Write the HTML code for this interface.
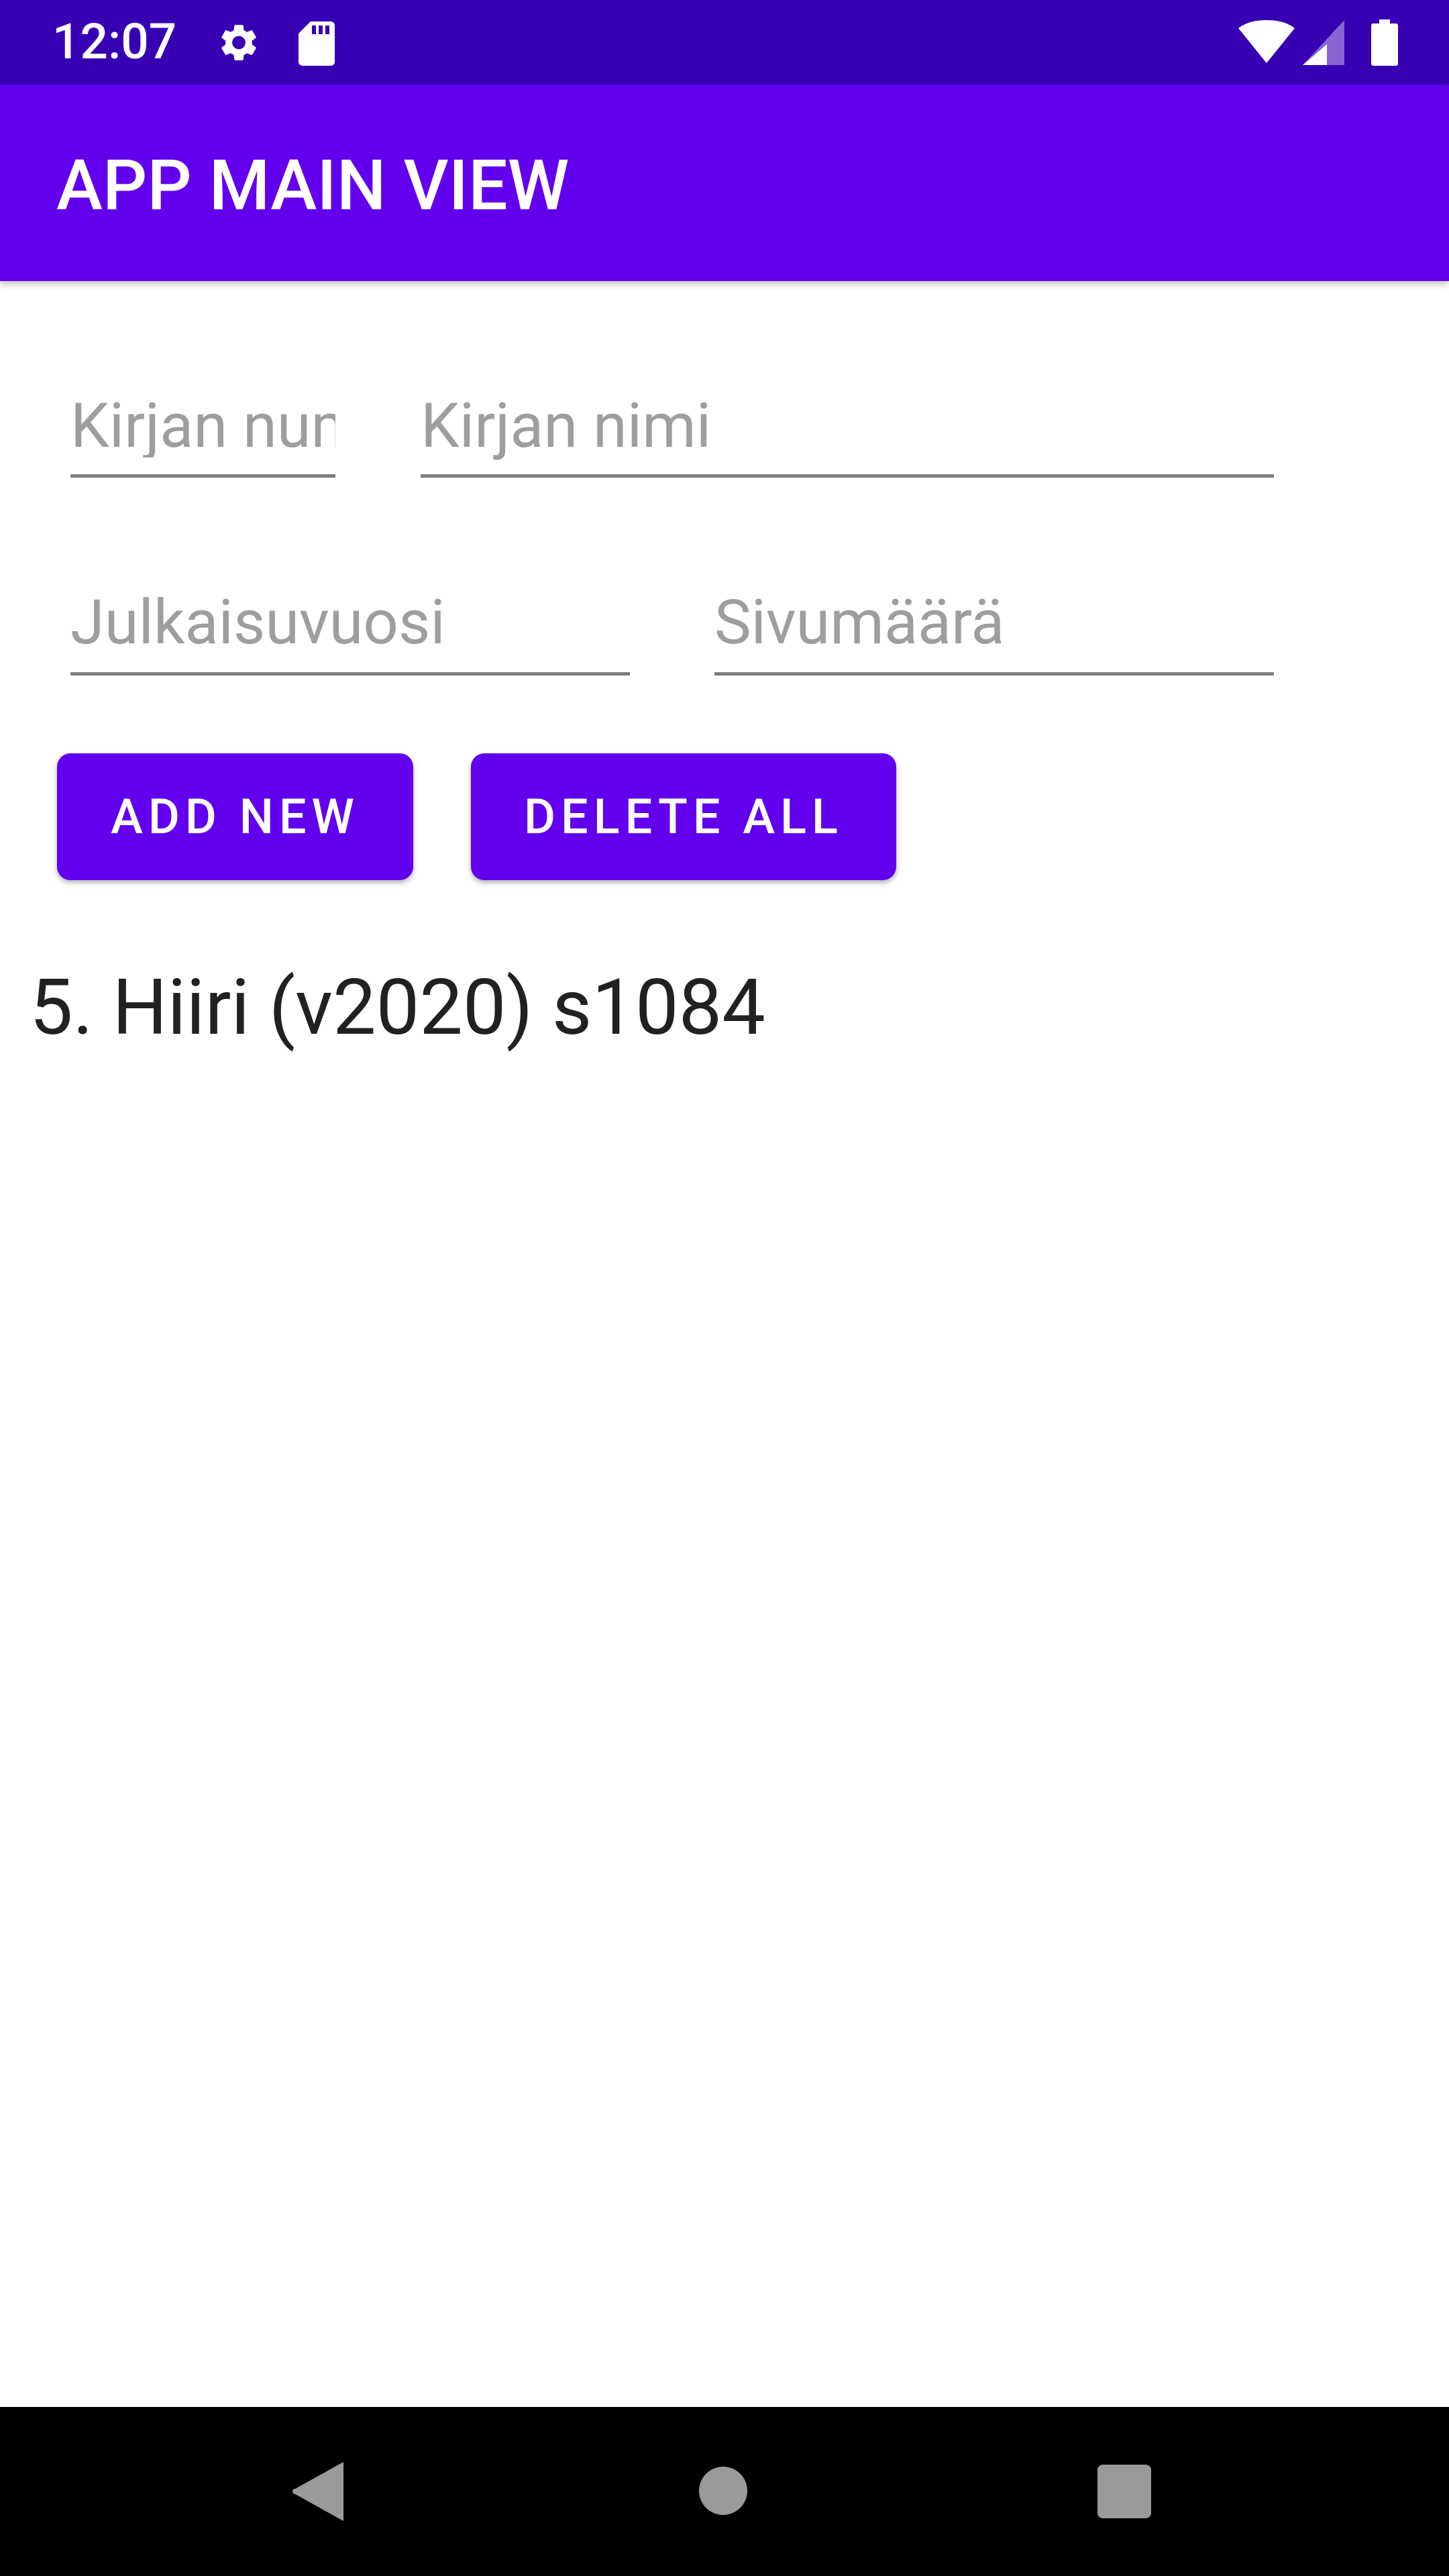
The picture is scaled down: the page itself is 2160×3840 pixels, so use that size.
<!DOCTYPE html>
<html><head><meta charset="utf-8"><style>
html,body{margin:0;padding:0;}
body{width:2160px;height:3840px;position:relative;background:#fff;overflow:hidden;font-family:"Roboto","Liberation Sans",sans-serif;}
.abs{position:absolute;}
.sb{left:0;top:0;width:2160px;height:126px;background:#3700b3;}
.ab{left:0;top:126px;width:2160px;height:293px;background:#6200ee;box-shadow:0 4px 10px rgba(0,0,0,0.25);}
.t{color:#fff;white-space:nowrap;line-height:1;}
.hint{color:#9e9e9e;font-size:92px;white-space:nowrap;line-height:1;}
.ul{height:5px;background:#7d7d7d;}
.btn{background:#6200ee;border-radius:20px;box-shadow:0 4px 8px rgba(0,0,0,0.3);color:#fff;font-weight:500;font-size:72px;letter-spacing:8px;display:flex;align-items:center;justify-content:center;}
.nav{left:0;top:3588px;width:2160px;height:252px;background:#000;}
</style></head><body>
<div class="abs sb"></div>
<div class="abs t" style="left:78px;top:26px;font-size:73px;font-weight:500;">12:07</div>
<svg class="abs" style="left:323px;top:30px" width="66" height="67" viewBox="0 0 24 24"><path fill="#fff" d="M19.14 12.94c.04-.3.06-.61.06-.94 0-.32-.02-.64-.07-.94l2.030-1.58a.49.49 0 0 0 .12-.61l-1.92-3.32a.49.49 0 0 0-.59-.22l-2.39.96c-.5-.38-1.03-.7-1.62-.94l-.36-2.54A.48.48 0 0 0 13.92 2.4h-3.84c-.24 0-.43.17-.47.41l-.36 2.54c-.59.24-1.13.57-1.62.94l-2.39-.96a.48.48 0 0 0-.59.22L2.74 8.87c-.12.21-.08.47.12.61l2.03 1.58c-.05.3-.09.63-.09.94s.02.64.07.94l-2.03 1.58a.49.49 0 0 0-.12.61l1.92 3.32c.12.22.37.29.59.22l2.39-.96c.5.38 1.03.7 1.62.94l.36 2.54c.05.24.24.41.48.41h3.84c.24 0 .44-.17.47-.41l.36-2.54c.59-.24 1.13-.56 1.62-.94l2.39.96c.22.08.47 0 .59-.22l1.92-3.32c.12-.22.07-.47-.12-.61l-2.01-1.58zM12 15.6A3.6 3.6 0 1 1 12 8.4a3.6 3.6 0 0 1 0 7.2z"/></svg>
<svg class="abs" style="left:445px;top:32px" width="54" height="66" viewBox="0 0 54 66"><path fill="#fff" d="M18 0H48a6 6 0 0 1 6 6V60a6 6 0 0 1-6 6H6a6 6 0 0 1-6-6V18z"/><rect x="20" y="6" width="6" height="13" fill="#3700b3"/><rect x="30" y="6" width="6" height="13" fill="#3700b3"/><rect x="40" y="6" width="6" height="13" fill="#3700b3"/></svg>
<svg class="abs" style="left:1846px;top:30px" width="84" height="64" viewBox="0 0 84 64"><path fill="#fff" d="M42 64L0 12C12 3 26 0 42 0s30 3 42 12z"/></svg>
<svg class="abs" style="left:1942px;top:30px" width="62" height="67" viewBox="0 0 62 67"><path fill="#fff" d="M62 0V67H0z" opacity="0.4"/><path fill="#fff" d="M36 36V67H0z"/></svg>
<svg class="abs" style="left:2044px;top:29px" width="40" height="69" viewBox="0 0 40 69"><rect x="12" y="0" width="16" height="6" fill="#fff"/><rect x="0" y="6" width="40" height="63" rx="3" fill="#fff"/></svg>
<div class="abs ab"></div>
<div class="abs t" style="left:84px;top:226px;font-size:104px;font-weight:500;">APP MAIN VIEW</div>

<div class="abs" style="left:105px;top:590px;width:395px;overflow:hidden;"><div class="hint">Kirjan numero</div></div>
<div class="abs ul" style="left:105px;top:707px;width:395px;"></div>
<div class="abs hint" style="left:627px;top:590px;">Kirjan nimi</div>
<div class="abs ul" style="left:627px;top:707px;width:1272px;"></div>
<div class="abs hint" style="left:105px;top:883px;">Julkaisuvuosi</div>
<div class="abs ul" style="left:105px;top:1002px;width:834px;"></div>
<div class="abs hint" style="left:1065px;top:883px;">Sivumäärä</div>
<div class="abs ul" style="left:1065px;top:1002px;width:834px;"></div>

<div class="abs btn" style="left:85px;top:1123px;width:531px;height:189px;">ADD NEW</div>
<div class="abs btn" style="left:702px;top:1123px;width:634px;height:189px;">DELETE ALL</div>

<div class="abs" style="left:44px;top:1445px;font-size:115px;color:#212121;white-space:nowrap;line-height:1;">5. Hiiri (v2020) s1084</div>

<div class="abs nav"></div>
<svg class="abs" style="left:436px;top:3670px" width="78" height="88" viewBox="0 0 78 88"><path fill="#9a9a9a" d="M76 0V88L4 48a4 4 0 0 1 0-8z"/></svg>
<div class="abs" style="left:1042px;top:3677px;width:72px;height:72px;border-radius:50%;background:#9a9a9a;"></div>
<div class="abs" style="left:1636px;top:3674px;width:80px;height:80px;border-radius:8px;background:#9a9a9a;"></div>
</body></html>
